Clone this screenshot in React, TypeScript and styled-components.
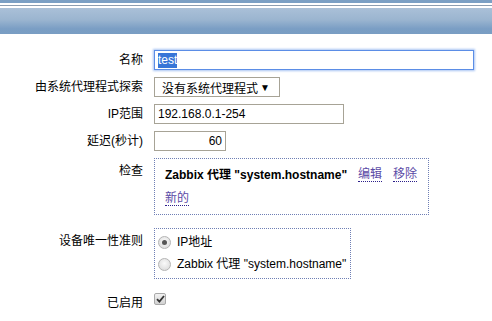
import React from 'react';
import styled, { createGlobalStyle } from 'styled-components';

const GlobalStyle = createGlobalStyle`
  body {
    margin: 0;
    background: #ffffff;
    font-family: "Liberation Sans", "Noto Sans CJK SC", Arial, sans-serif;
    font-size: 12px;
    color: #000;
  }
`;

const Header = styled.div`
  height: 34px;
  background:
    linear-gradient(#7b9fc4, #7b9fc4) 0 0 / 100% 3px no-repeat,
    linear-gradient(#ffffff, #ffffff) 0 3px / 100% 2px no-repeat,
    linear-gradient(#8d9db0, #8d9db0) 0 5px / 100% 1px no-repeat,
    linear-gradient(#ffffff, #ffffff) 0 6px / 100% 2px no-repeat,
    linear-gradient(#aac0d8, #9bb5d0 45%, #7a9ec4 80%, #799dc3) 0 8px / 100% 26px no-repeat;
`;

const Form = styled.div`
  display: grid;
  grid-template-columns: 143px 1fr;
  column-gap: 11px;
  row-gap: 7px;
  padding-top: 16px;
  padding-right: 18px;
`;

const Label = styled.div<{ $top?: number }>`
  text-align: right;
  align-self: ${p => (p.$top !== undefined ? 'start' : 'center')};
  padding-top: ${p => p.$top ?? 0}px;
  line-height: 14px;
`;

const TextBox = styled.div<{ $width: number; $right?: boolean; $focus?: boolean }>`
  box-sizing: border-box;
  width: ${p => p.$width}px;
  height: 20px;
  border: 1px solid ${p => (p.$focus ? '#5b8de6' : '#a7a396')};
  box-shadow: ${p => (p.$focus ? '0 0 2px 1px #a9c5f3' : 'none')};
  padding: 0 3px;
  display: flex;
  align-items: center;
  justify-content: ${p => (p.$right ? 'flex-end' : 'flex-start')};
  font-size: 12px;
  background: #fff;
`;

const Selected = styled.span`
  background: #3875d7;
  color: #fff;
  line-height: 15px;
`;

const Select = styled.div`
  box-sizing: border-box;
  width: 126px;
  height: 20px;
  border: 1px solid #a7a396;
  display: flex;
  align-items: center;
  justify-content: space-between;
  padding: 0 9px 0 7px;
  font-size: 12px;
`;

const Arrow = styled.span`
  font-size: 10px;
`;

const Box = styled.div<{ $width: number; $height: number }>`
  box-sizing: border-box;
  width: ${p => p.$width}px;
  height: ${p => p.$height}px;
  border: 1px dotted #6f7fb5;
`;

const CheckBox = styled(Box)`
  padding: 8px 10px 0;
  display: flex;
  flex-direction: column;
  gap: 9px;
`;

const CheckRow = styled.div`
  display: flex;
  align-items: center;
  gap: 11px;
  line-height: 14px;
  white-space: nowrap;
`;

const Bold = styled.span`
  font-weight: bold;
`;

const Link = styled.span`
  color: #5b4aa6;
  border-bottom: 1px dotted #2c1f8a;
  line-height: 14px;
`;

const RadioBox = styled(Box)`
  padding: 6px 0 0 3px;
  display: flex;
  flex-direction: column;
  gap: 8px;
`;

const RadioRow = styled.div`
  display: flex;
  align-items: center;
  gap: 6px;
  line-height: 14px;
  white-space: nowrap;
`;

const Radio = styled.span<{ $on?: boolean }>`
  box-sizing: border-box;
  width: 13px;
  height: 13px;
  border-radius: 50%;
  border: 1px solid #b4b4b4;
  background: radial-gradient(circle at 50% 40%, #fafafa, #d6d6d6);
  display: flex;
  align-items: center;
  justify-content: center;
  &::after {
    content: '';
    display: ${p => (p.$on ? 'block' : 'none')};
    width: 5px;
    height: 5px;
    border-radius: 50%;
    background: #555;
  }
`;

const Tick = styled.span`
  box-sizing: border-box;
  width: 12px;
  height: 12px;
  margin-top: 2px;
  border: 1px solid #a9a9a9;
  border-radius: 2px;
  background: linear-gradient(#f2f2f2, #d2d2d2);
  display: flex;
  align-items: center;
  justify-content: center;
`;

const Control = styled.div<{ $mt?: number }>`
  margin-top: ${p => p.$mt ?? 0}px;
`;

const App: React.FC = () => {
  return (
    <>
      <GlobalStyle />
      <Header />
      <Form>
        <Label>名称</Label>
        <Control>
          <TextBox $width={320} $focus>
            <Selected>test</Selected>
          </TextBox>
        </Control>

        <Label>由系统代理程式探索</Label>
        <Control>
          <Select>
            没有系统代理程式 <Arrow>▼</Arrow>
          </Select>
        </Control>

        <Label>IP范围</Label>
        <Control>
          <TextBox $width={190}>192.168.0.1-254</TextBox>
        </Control>

        <Label>延迟(秒计)</Label>
        <Control>
          <TextBox $width={72} $right>60</TextBox>
        </Control>

        <Label $top={6}>检查</Label>
        <Control>
          <CheckBox $width={275} $height={57}>
            <CheckRow>
              <Bold>Zabbix 代理 "system.hostname"</Bold>
              <Link>编辑</Link>
              <Link>移除</Link>
            </CheckRow>
            <CheckRow>
              <Link>新的</Link>
            </CheckRow>
          </CheckBox>
        </Control>

        <Label $top={12}>设备唯一性准则</Label>
        <Control $mt={6}>
          <RadioBox $width={197} $height={51}>
            <RadioRow>
              <Radio $on />
              IP地址
            </RadioRow>
            <RadioRow>
              <Radio />
              Zabbix 代理 "system.hostname"
            </RadioRow>
          </RadioBox>
        </Control>

        <Label $top={10}>已启用</Label>
        <Control $mt={5}>
          <Tick>
            <svg width="9" height="8" viewBox="0 0 9 8">
              <path d="M1 4.2 L3.4 6.6 L8 1" fill="none" stroke="#333" strokeWidth="1.8" />
            </svg>
          </Tick>
        </Control>
      </Form>
    </>
  );
};

export default App;
